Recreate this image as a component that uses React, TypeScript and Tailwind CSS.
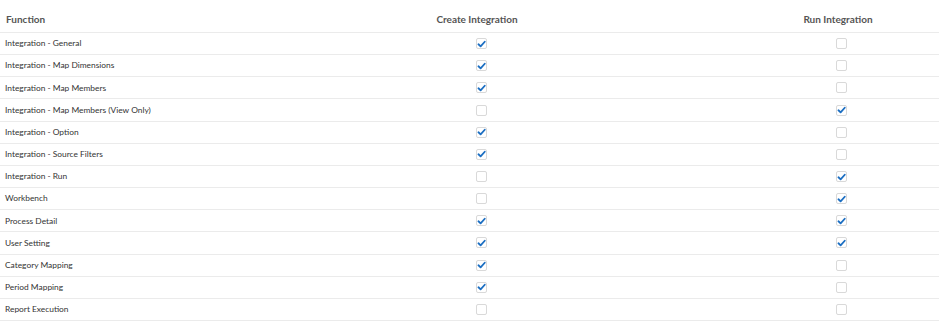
import * as React from 'react';

const rows: [string, boolean, boolean][] = [
    ['Integration - General', true, false],
    ['Integration - Map Dimensions', true, false],
    ['Integration - Map Members', true, false],
    ['Integration - Map Members (View Only)', false, true],
    ['Integration - Option', true, false],
    ['Integration - Source Filters', true, false],
    ['Integration - Run', false, true],
    ['Workbench', false, true],
    ['Process Detail', true, true],
    ['User Setting', true, true],
    ['Category Mapping', true, false],
    ['Period Mapping', true, false],
    ['Report Execution', false, false],
];

function Box({ checked }: { checked: boolean }) {
    return (
        <div className="w-[11px] h-[11px] rounded-[2px] border border-[#d9d9d9] bg-white flex items-center justify-center">
            {checked && (
                <svg viewBox="0 0 10 10" className="w-[10px] h-[10px]">
                    <path d="M1.6 5.3 L4 7.6 L8.6 2.5" fill="none" stroke="#1b6ec2" strokeWidth="2" strokeLinecap="round" strokeLinejoin="round" />
                </svg>
            )}
        </div>
    );
}

export default function App() {
    return (
        <div className="w-[939px] h-[328px] bg-white font-['Lato',sans-serif]">
            <div className="grid grid-cols-[217px_520px_202px] h-[33px] items-center pt-[6px] border-b border-[#ebebeb] text-[10px] font-bold text-[#555]">
                <span className="pl-[6px]">Function</span>
                <span className="text-center">Create Integration</span>
                <span className="text-center">Run Integration</span>
            </div>
            {rows.map(([name, create, run]) => (
                <div key={name} className="grid grid-cols-[217px_520px_202px] h-[22.17px] items-center border-b border-[#ebebeb] text-[8.4px] text-[#333]">
                    <span className="pl-[5px]">{name}</span>
                    <div className="flex justify-center pl-[9px]"><Box checked={create} /></div>
                    <div className="flex justify-center pl-[7px]"><Box checked={run} /></div>
                </div>
            ))}
        </div>
    );
}
